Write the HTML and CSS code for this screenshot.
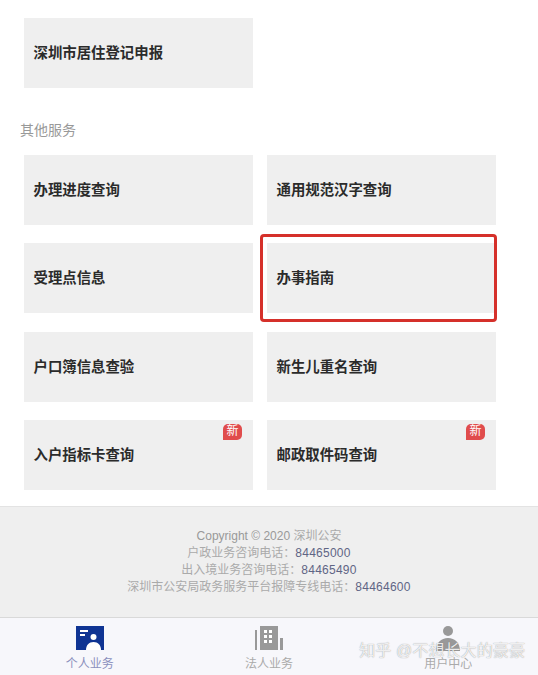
FILE: index.html
```html
<!DOCTYPE html>
<html lang="zh-CN">
<head>
  <meta charset="UTF-8">
  <meta name="viewport" content="width=device-width, initial-scale=1.0">
  <title>深圳公安</title>
  <link rel="stylesheet" href="styles.css">
</head>
<body>

  <div class="service-grid top-grid">
    <div class="card">深圳市居住登记申报</div>
  </div>

  <div class="section-title">其他服务</div>

  <div class="service-grid">
    <div class="card">办理进度查询</div>
    <div class="card">通用规范汉字查询</div>
    <div class="card">受理点信息</div>
    <div class="card">办事指南<span class="highlight"></span></div>
    <div class="card">户口簿信息查验</div>
    <div class="card">新生儿重名查询</div>
    <div class="card">入户指标卡查询<span class="badge">新</span></div>
    <div class="card">邮政取件码查询<span class="badge">新</span></div>
  </div>

  <footer class="footer">
    <div><span class="copyright">Copyright © 2020</span> 深圳公安</div>
    <div>户政业务咨询电话：<span class="phone">84465000</span></div>
    <div>出入境业务咨询电话：<span class="phone">84465490</span></div>
    <div>深圳市公安局政务服务平台报障专线电话：<span class="phone">84464600</span></div>
  </footer>

  <nav class="tabbar">
    <div class="tab active">
      <svg class="tab-icon" width="28" height="25" viewBox="0 0 28 25">
        <path fill="#0f3493" d="M0 0h28v24H0z"/>
        <path fill="#fff" d="M4 4h8v2H4zM4 8h5v2H4z"/>
        <circle fill="#fff" cx="17.500" cy="11" r="3"/>
        <path fill="#fff" d="M10 24c0-5 3-8 7.500-8S25 19 25 24z"/>
      </svg>
      <span>个人业务</span>
    </div>
    <div class="tab">
      <svg class="tab-icon" width="28" height="25" viewBox="0 0 28 25">
        <path fill="#999" d="M0 4h2v20H0zM5 0h18v24H5zM25 12h3v12h-3z"/>
        <path fill="#fff" d="M9 4h3v3H9zM14 4h3v3h-3zM9 9h3v3H9zM14 9h3v3h-3zM9 14h3v3H9zM14 14h3v3h-3z"/>
      </svg>
      <span>法人业务</span>
    </div>
    <div class="tab">
      <svg class="tab-icon" width="28" height="25" viewBox="0 0 28 25">
        <circle fill="#999" cx="14" cy="5" r="5"/>
        <path fill="#999" d="M2 25c0-8 5-13 12-13s12 5 12 13z"/>
      </svg>
      <span>用户中心</span>
    </div>
  </nav>

  <div class="watermark">知乎 @不想长大的豪豪</div>

</body>
</html>
```

FILE: styles.css
```css
html, body {
  margin: 0;
  padding: 0;
}

body {
  position: relative;
  height: 675px;
  overflow: hidden;
  background-color: #fff;
  font-family: "Liberation Sans", Arial, "Noto Sans CJK SC", sans-serif;
  color: #333;
}

.service-grid {
  display: grid;
  grid-template-columns: 229px 229px;
  column-gap: 14px;
  row-gap: 18.33px;
  padding-left: 24px;
}

.top-grid {
  padding-top: 18px;
}

.section-title {
  margin: 33px 0 15px 20px;
  font-size: 14px;
  line-height: 19px;
  color: #999;
}

.card {
  position: relative;
  display: flex;
  align-items: center;
  height: 70px;
  box-sizing: border-box;
  padding: 0 0 3px 9.5px;
  background-color: #efefef;
  font-size: 14.4px;
  font-weight: bold;
  color: #2b2b2b;
}

.badge {
  position: absolute;
  top: 4px;
  right: 11px;
  width: 19px;
  height: 16px;
  border-radius: 5px 5px 5px 0;
  background-color: #e04c4c;
  font-size: 12px;
  font-weight: normal;
  line-height: 15px;
  text-align: center;
  color: #fff;
}

.highlight {
  position: absolute;
  top: -9px;
  left: -7px;
  width: 231px;
  height: 82px;
  border: 3px solid #d5302a;
  border-radius: 4px;
}

.footer {
  margin-top: 16px;
  height: 111px;
  box-sizing: border-box;
  padding-top: 21px;
  border-top: 1px solid #e3e3e3;
  background-color: #efefef;
  font-size: 12px;
  line-height: 17px;
  text-align: center;
  color: #aaa;
}

.copyright {
  color: #999;
}

.phone {
  letter-spacing: 0.25px;
  color: #5f6585;
}

.tabbar {
  display: flex;
  height: 58px;
  box-sizing: border-box;
  border-top: 1px solid #d9d9d9;
  background-color: #f7f7fb;
}

.tab {
  display: flex;
  flex: 1;
  flex-direction: column;
  align-items: center;
  padding-top: 8px;
  font-size: 12px;
  line-height: 16px;
  color: #aaa;
}

.tab.active {
  color: #8b90bd;
}

.tab-icon {
  display: block;
  margin-bottom: 5px;
}

.watermark {
  position: absolute;
  top: 640px;
  right: 13px;
  font-size: 16px;
  line-height: 22px;
  letter-spacing: 0.1px;
  color: rgba(255, 255, 255, 0.85);
  text-shadow: 0 0 1px rgba(110, 110, 110, 0.8);
}
```
